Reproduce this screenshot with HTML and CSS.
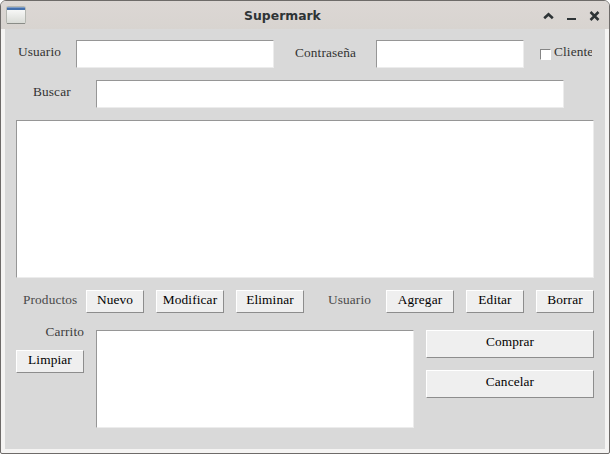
FILE: index.html
```html
<!DOCTYPE html>
<html lang="es">
<head>
<meta charset="utf-8">
<title>Supermark</title>
<link rel="stylesheet" href="styles.css">
</head>
<body>
<div class="window">
  <header class="titlebar">
    <svg class="app-icon" width="22" height="20" viewBox="0 0 22 20">
      <defs><linearGradient id="g" x1="0" y1="0" x2="0" y2="1"><stop offset="0" stop-color="#fff"/><stop offset="1" stop-color="#d8dad5"/></linearGradient></defs>
      <rect x="0.5" y="0.5" width="19" height="17" rx="1" fill="url(#g)" stroke="#b4b6b0"/>
      <path d="M1 17.5H19" stroke="#8a8c87"/>
      <rect x="1" y="1" width="18" height="1" fill="#7f9cc6"/>
      <rect x="1" y="2" width="18" height="2" fill="#4470ad"/>
    </svg>
    <h1 class="title">Supermark</h1>
    <svg class="controls" width="58" height="12" viewBox="0 0 58 12" fill="none" stroke="#2e3436">
      <path d="M1.2 8.2L5.5 4.2L9.8 8.2" stroke-width="2.6"/>
      <path d="M24 9H33" stroke-width="2"/>
      <path d="M47.5 2L55.5 10M55.5 2L47.5 10" stroke-width="2.5"/>
    </svg>
  </header>
  <main class="content">
    <div class="row login">
      <label class="label user">Usuario</label>
      <div class="field"></div>
      <label class="label pass">Contraseña</label>
      <div class="field"></div>
      <div class="check"><span class="box"></span><span class="check-text">Cliente</span></div>
    </div>
    <div class="row search">
      <label class="label">Buscar</label>
      <div class="field"></div>
    </div>
    <div class="field list"></div>
    <div class="row actions">
      <span class="label">Productos</span>
      <button class="btn">Nuevo</button>
      <button class="btn">Modificar</button>
      <button class="btn">Eliminar</button>
      <span class="label">Usuario</span>
      <button class="btn">Agregar</button>
      <button class="btn">Editar</button>
      <button class="btn">Borrar</button>
    </div>
    <div class="row cart">
      <div class="cart-side">
        <span class="label">Carrito</span>
        <button class="btn">Limpiar</button>
      </div>
      <div class="field"></div>
      <div class="checkout">
        <button class="btn tall">Comprar</button>
        <button class="btn tall">Cancelar</button>
      </div>
    </div>
  </main>
</div>
</body>
</html>
```
FILE: styles.css
```css
* { box-sizing: border-box; }
body { margin: 0; background: #fff; overflow: hidden; }
.window {
  width: 610px;
  height: 454px;
  border: 1px solid #6e6b69;
  border-radius: 6px 6px 2px 2px;
  background: #f5f4f3;
  overflow: hidden;
}
.titlebar {
  display: grid;
  grid-template-columns: 58px 1fr 58px;
  align-items: center;
  height: 28px;
  padding: 0 8px 0 5px;
  background: linear-gradient(#dcd7d4, #d8d4d0);
}
.app-icon { margin-top: 2px; }
.title {
  margin: 0;
  padding: 1px 42px 0 0;
  font: bold 12.4px/16px "DejaVu Sans", sans-serif;
  color: #2e3436;
  text-align: center;
}
.controls { margin-top: 2px; }
.content {
  width: 600px;
  height: 420px;
  margin: 0 4px;
  padding: 11px;
  background: #d9d9d9;
  font: 13.33px/16px "Liberation Serif", serif;
  letter-spacing: 0.12px;
  color: #333;
}
.row { display: grid; }
.field {
  background: #fff;
  border: 1px solid;
  border-color: #969696 #ececec #ececec #969696;
}
.label { white-space: nowrap; }
.login { grid-template-columns: 60px 198px 102px 148px 70px; height: 28px; }
.user { padding: 4px 0 0 2px; }
.pass { padding: 5px 0 0 21px; }
.check { display: flex; padding: 4px 0 0 16px; width: 68px; overflow: hidden; }
.box {
  flex: none;
  width: 11px;
  height: 11px;
  margin: 5px 3px 0 0;
  background: #fff;
  border: 1px solid;
  border-color: #858585 #fff #fff #858585;
}
.check-text { white-space: nowrap; overflow: hidden; }
.search { grid-template-columns: 80px 468px; height: 28px; margin-top: 12px; }
.search .label { padding: 4px 0 0 17px; }
.list { height: 158px; margin-top: 12px; }
.actions {
  grid-template-columns: 58px 58px 68px 68px 58px 68px 58px 58px;
  column-gap: 12px;
  height: 23px;
  margin-top: 12px;
}
.actions .label { padding: 2px 0 0 7px; color: #4a4a4a; }
.actions .label:nth-of-type(2) { padding-left: 12px; }
.btn {
  height: 23px;
  padding: 1px 0 0;
  display: flex;
  justify-content: center;
  align-items: flex-start;
  font: inherit;
  letter-spacing: inherit;
  color: #000;
  background: #efefef;
  border: 1px solid;
  border-color: #fff #8d8d8d #8d8d8d #fff;
}
.tall { height: 28px; padding-top: 3px; }
.cart { grid-template-columns: 68px 318px 168px; column-gap: 12px; height: 98px; margin-top: 17px; }
.cart-side { display: grid; grid-template-rows: 20px 23px; }
.cart-side .label { text-align: right; margin-top: -6px; color: #3c3c3c; }
.checkout { display: grid; grid-template-rows: 28px 28px; row-gap: 12px; }
```
